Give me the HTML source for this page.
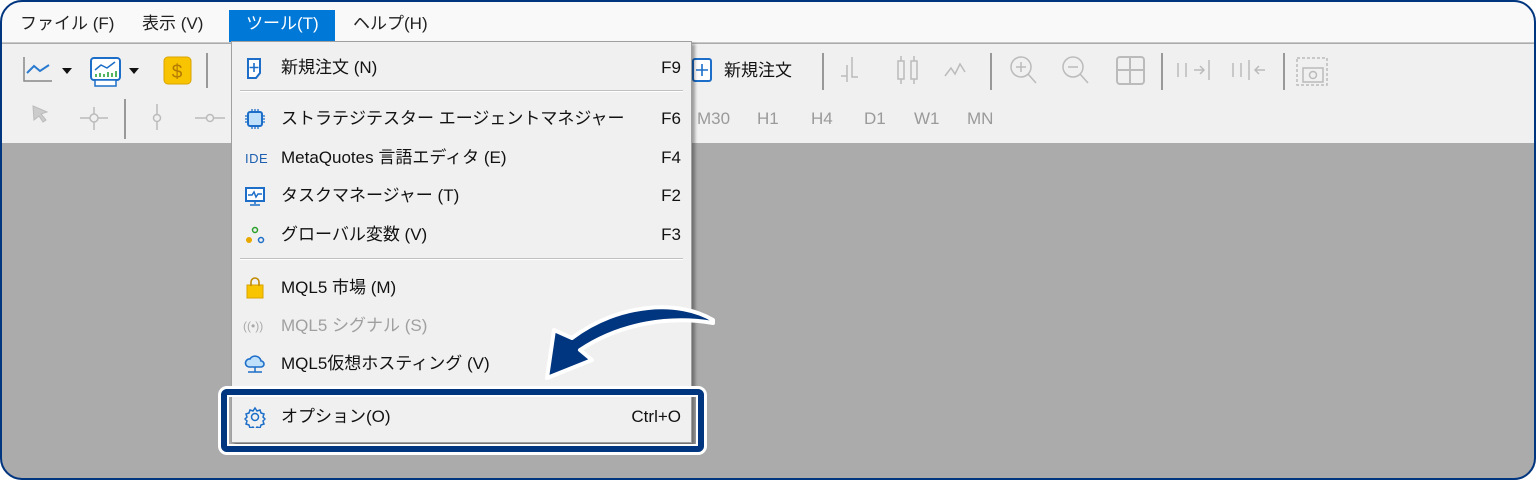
<!DOCTYPE html>
<html><head><meta charset="utf-8"><style>
*{margin:0;padding:0;box-sizing:border-box}
body{width:1536px;height:480px;background:#fff;overflow:hidden;position:relative;font-family:"Liberation Sans","Noto Sans CJK JP",sans-serif;}
.frame{position:absolute;left:0;top:0;width:1536px;height:480px;border-radius:22px;overflow:hidden;background:#ababab}
.fb{position:absolute;left:0;top:0;width:1536px;height:480px;border:2px solid #003580;border-radius:22px}
.menubar{position:absolute;left:0;top:0;width:100%;height:43px;background:#f9f9f9;border-bottom:1px solid #c8c8c8}
.mb{position:absolute;top:10px;font-size:17px;color:#222;height:32px;line-height:28px}
.toolbar{position:absolute;left:0;top:44px;width:100%;height:99px;background:#f0f0f0}
.menu{position:absolute;left:231px;top:41px;width:461px;height:402px;background:#f0f0f0;border:1px solid #a0a0a0;box-shadow:3px 3px 3px rgba(0,0,0,.35)}
.it{position:absolute;left:0;width:100%;height:36px;font-size:17px;color:#111;line-height:24px}
.it .t{position:absolute;left:49px;top:6px}
.it .k{position:absolute;right:10px;top:6px}
.it .ic{position:absolute;left:12px;top:7px;width:22px;height:22px}
.sep{position:absolute;left:8px;right:8px;height:2px;border-top:1px solid #c0c0c0;border-bottom:1px solid #fff}
.tf{position:absolute;top:107px;font-size:17px;color:#9a9a9a;line-height:24px}
</style></head><body>
<div class="frame">
<div class="menubar">
<div class="mb" style="left:20px">ファイル (F)</div>
<div class="mb" style="left:142px">表示 (V)</div>
<div class="mb" style="left:229px;width:106px;background:#0078d7;color:#fff;padding-left:17px">ツール(T)</div>
<div class="mb" style="left:353px">ヘルプ(H)</div>
</div>
<div class="toolbar">
<svg width="1536" height="100" style="position:absolute;left:0;top:-1px">
<path d="M24 14V38H52" stroke="#888" fill="none" stroke-width="1.5"/>
<path d="M27 30l7-7 6 5 9-6" stroke="#2a7bd0" fill="none" stroke-width="2"/>
<path d="M62 25h10l-5 6z" fill="#111"/>
<rect x="91" y="15" width="29" height="22" rx="3" fill="#fff" stroke="#1c6ec8" stroke-width="2"/>
<path d="M95 27l6-5 6 3 8-6" stroke="#1c6ec8" fill="none" stroke-width="1.5"/>
<path d="M96 34v-3M100 34v-4M104 34v-3M108 34v-5M112 34v-4M116 34v-6" stroke="#1a9a2a" stroke-width="1.5"/>
<rect x="95" y="37" width="21" height="6" fill="#fff" stroke="#1c6ec8" stroke-width="1.5"/>
<path d="M129 25h10l-5 6z" fill="#111"/>
<rect x="164" y="14" width="27" height="27" rx="4" fill="#f8c400" stroke="#d9a300"/>
<text x="177" y="35" font-size="19" fill="#b37a00" text-anchor="middle" font-family="Liberation Sans">$</text>
<rect x="206" y="10" width="2" height="35" fill="#999"/>
<path d="M33 63l14 6-6 2 5 6-3 2-4-6-5 4z" fill="#ccc" stroke="#bbb"/>
<path d="M80 75h28M94 64v23" stroke="#bbb" stroke-width="1.5"/><circle cx="94" cy="75" r="4" fill="#f0f0f0" stroke="#bbb" stroke-width="1.5"/>
<rect x="124" y="56" width="2" height="40" fill="#999"/>
<path d="M157 61v26" stroke="#bbb" stroke-width="1.5"/><circle cx="157" cy="75" r="3.5" fill="#f0f0f0" stroke="#bbb" stroke-width="1.5"/>
<path d="M195 75h30" stroke="#bbb" stroke-width="1.5"/><circle cx="210" cy="75" r="3.5" fill="#f0f0f0" stroke="#bbb" stroke-width="1.5"/>
<rect x="822" y="10" width="2" height="37" fill="#999"/>
<path d="M841 33h6V22M852 20v14h6M847 25v14M852 14v10" stroke="#bbb" stroke-width="1.5" fill="none"/>
<rect x="898" y="18" width="6" height="18" fill="none" stroke="#bbb" stroke-width="1.5"/><rect x="911" y="18" width="6" height="18" fill="none" stroke="#bbb" stroke-width="1.5"/>
<path d="M901 13v5M901 36v5M914 13v5M914 36v5" stroke="#bbb" stroke-width="1.5"/>
<path d="M945 33l6-8 4 6 5-10 5 8" stroke="#bbb" stroke-width="1.5" fill="none"/>
<rect x="990" y="10" width="2" height="37" fill="#999"/>
<circle cx="1021" cy="24" r="10" fill="none" stroke="#bbb" stroke-width="1.5"/><path d="M1028 31l8 9M1016 24h10M1021 19v10" stroke="#bbb" stroke-width="1.5"/>
<circle cx="1073" cy="24" r="10" fill="none" stroke="#bbb" stroke-width="1.5"/><path d="M1080 31l8 9M1068 24h10" stroke="#bbb" stroke-width="1.5"/>
<rect x="1117" y="14" width="27" height="27" rx="3" fill="none" stroke="#bbb" stroke-width="2"/><path d="M1130 14v27M1117 27h27" stroke="#bbb" stroke-width="2"/>
<rect x="1161" y="10" width="2" height="37" fill="#999"/>
<path d="M1178 20v14M1186 20v14M1194 27h10M1200 23l4 4-4 4M1209 17v20" stroke="#bbb" stroke-width="1.5" fill="none"/>
<path d="M1233 20v14M1241 20v14M1255 27h10M1259 23l-4 4 4 4M1249 17v20" stroke="#bbb" stroke-width="1.5" fill="none"/>
<rect x="1283" y="10" width="2" height="37" fill="#999"/>
<rect x="1297" y="15" width="30" height="27" fill="none" stroke="#bbb" stroke-width="1.5" stroke-dasharray="3 2"/>
<rect x="1303" y="25" width="20" height="14" fill="none" stroke="#bbb" stroke-width="1.5"/><circle cx="1313" cy="32" r="3.5" fill="none" stroke="#bbb" stroke-width="1.5"/>
<rect x="693" y="16" width="18" height="22" rx="2" fill="#fff" stroke="#1c6ec8" stroke-width="2"/>
<path d="M702 21v12M696 27h12" stroke="#1c6ec8" stroke-width="1.6"/>
</svg>
<div style="position:absolute;left:724px;top:15px;font-size:17px;color:#111;line-height:24px">新規注文</div>
</div>
<div class="tf" style="left:697px">M30</div>
<div class="tf" style="left:757px">H1</div>
<div class="tf" style="left:811px">H4</div>
<div class="tf" style="left:864px">D1</div>
<div class="tf" style="left:914px">W1</div>
<div class="tf" style="left:967px">MN</div>

<div class="menu">
<div class="it" style="top:8px"><svg class="ic" viewBox="0 0 22 22"><path d="M4 2h12v14l-4 5H4z" fill="#fff" stroke="#1c6ec8" stroke-width="2"/><path d="M10 6v9M5.5 10.5h9" stroke="#1c6ec8" stroke-width="1.6"/></svg><span class="t">新規注文 (N)</span><span class="k">F9</span></div>
<div class="sep" style="top:48px"></div>
<div class="it" style="top:59px"><svg class="ic" viewBox="0 0 22 22"><rect x="4" y="4" width="14" height="14" rx="2" fill="#bfe0fb" stroke="#1c6ec8" stroke-width="2"/><path d="M8 1v3M11 1v3M14 1v3M8 18v3M11 18v3M14 18v3M1 8h3M1 11h3M1 14h3M18 8h3M18 11h3M18 14h3" stroke="#1c6ec8" stroke-width="1.3"/></svg><span class="t">ストラテジテスター エージェントマネジャー</span><span class="k">F6</span></div>
<div class="it" style="top:98px"><span style="position:absolute;left:13px;top:7px;font-size:13px;color:#1c5fb0;letter-spacing:0.5px">IDE</span><span class="t">MetaQuotes 言語エディタ (E)</span><span class="k">F4</span></div>
<div class="it" style="top:136px"><svg class="ic" viewBox="0 0 22 22"><rect x="2" y="3" width="18" height="13" fill="#fff" stroke="#1c6ec8" stroke-width="2"/><path d="M4 10h4l2-3 2 5 2-3h4M11 16v3M6 20h10" stroke="#1c6ec8" stroke-width="1.5" fill="none"/></svg><span class="t">タスクマネージャー (T)</span><span class="k">F2</span></div>
<div class="it" style="top:175px"><svg class="ic" viewBox="0 0 22 22"><circle cx="11" cy="6" r="2.5" fill="none" stroke="#2aa02a" stroke-width="1.5"/><circle cx="5" cy="16" r="3" fill="#e8a800"/><circle cx="17" cy="16" r="2.5" fill="none" stroke="#1c6ec8" stroke-width="1.5"/></svg><span class="t">グローバル変数 (V)</span><span class="k">F3</span></div>
<div class="sep" style="top:216px"></div>
<div class="it" style="top:228px"><svg class="ic" viewBox="0 0 22 22"><rect x="3" y="8" width="16" height="13" fill="#f8c400" stroke="#d9a300"/><path d="M7 9V5a4 4 0 0 1 8 0v4" stroke="#c08a00" stroke-width="1.6" fill="none"/></svg><span class="t">MQL5 市場 (M)</span></div>
<div class="it" style="top:266px;color:#a0a0a0"><span style="position:absolute;left:11px;top:6px;font-size:12px;color:#aaa">((•))</span><span class="t">MQL5 シグナル (S)</span></div>
<div class="it" style="top:304px"><svg class="ic" viewBox="0 0 22 22"><path d="M5 14a4 4 0 0 1 1-8 6 6 0 0 1 11 2 3 3 0 0 1 0 6z" fill="#bfe0fb" stroke="#1c6ec8" stroke-width="1.6"/><path d="M11 14v5M4 19h14" stroke="#1c6ec8" stroke-width="1.5"/></svg><span class="t">MQL5仮想ホスティング (V)</span></div>
<div class="it" style="top:357px"><svg class="ic" viewBox="0 0 22 22"><path d="M11 2l2 3 3-1 1 3 3 1-1 3 2 2-2 2 1 3-3 1-1 3-3-1-2 3-2-3-3 1-1-3-3-1 1-3-2-2 2-2-1-3 3-1 1-3 3 1z" fill="none" stroke="#1c6ec8" stroke-width="1.5"/><circle cx="11" cy="11" r="3.5" fill="none" stroke="#1c6ec8" stroke-width="1.5"/></svg><span class="t">オプション(O)</span><span class="k">Ctrl+O</span></div>
</div>
</div>
<div class="fb"></div>
<div style="position:absolute;left:218px;top:386px;width:489px;height:69px;border:3px solid #fff;border-radius:9px"></div>
<div style="position:absolute;left:221px;top:389px;width:483px;height:63px;border:6px solid #003580;border-radius:6px"></div>
<div style="position:absolute;left:227px;top:395px;width:471px;height:51px;border:2px solid #fff"></div>
<svg width="1536" height="480" style="position:absolute;left:0;top:0">
<path d="M713,320 C680,300 620,302 572,338 L554,330 L547,378 L592,360 L580,350 C622,322 672,316 713,323 Z" fill="#003580" stroke="#fff" stroke-width="4" stroke-linejoin="round"/>
</svg>
</body></html>
